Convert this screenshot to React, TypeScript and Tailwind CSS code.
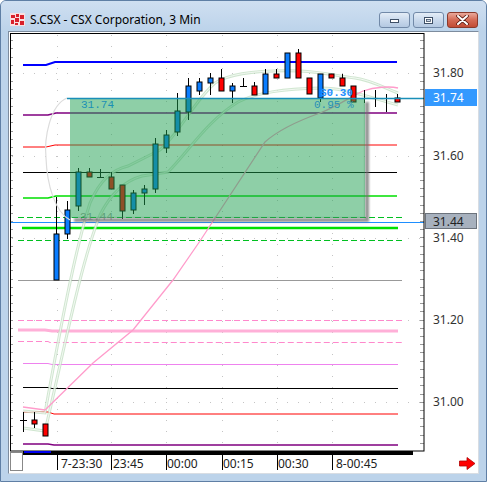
import React from 'react'

type Candle = [string, number, number, number, number]

// [type, wickTop, bodyTop, bodyBottom, wickBottom]; b = up (blue), r = down (red), d = doji cross, t = doji "T"
const candles: Candle[] = [
  ['d', 412, 420, 420, 432],
  ['r', 412, 420, 424, 428],
  ['r', 424, 424, 436, 436],
  ['b', 197, 234, 280, 280],
  ['b', 201, 210, 234, 239],
  ['b', 168, 172, 206, 211],
  ['r', 168, 172, 177, 177],
  ['t', 169, 177, 177, 177],
  ['r', 172, 177, 189, 189],
  ['r', 185, 185, 211, 219],
  ['b', 190, 193, 210, 214],
  ['b', 185, 189, 193, 205],
  ['b', 138, 144, 189, 193],
  ['b', 130, 135, 148, 153],
  ['b', 93, 111, 132, 136],
  ['b', 78, 86, 112, 120],
  ['b', 78, 82, 91, 95],
  ['b', 73, 78, 83, 95],
  ['r', 69, 78, 91, 91],
  ['b', 83, 86, 91, 103],
  ['t', 78, 86, 86, 86],
  ['r', 82, 86, 95, 95],
  ['b', 69, 74, 94, 94],
  ['r', 69, 74, 78, 78],
  ['b', 53, 53, 78, 78],
  ['r', 49, 53, 78, 78],
  ['r', 78, 78, 94, 94],
  ['b', 74, 74, 98, 102],
  ['r', 74, 74, 78, 78],
  ['r', 74, 78, 86, 86],
  ['r', 86, 86, 102, 102],
  ['d', 90, 98, 98, 103],
  ['d', 90, 98, 98, 107],
  ['d', 94, 98, 98, 112],
  ['r', 94, 98, 102, 102],
]

const hLines = [
  { d: 'M23,65 L46,65 L55,62 L397,62', c: '#0000ff', w: 2 },
  { d: 'M23,115 L48,115 L56,113 L397,113', c: '#800080', w: 1.5 },
  { d: 'M23,147 L46,147 L55,145 L397,145', c: '#ff0000', w: 1 },
  { d: 'M23,172.5 L397,172.5', c: '#000000', w: 1 },
  { d: 'M23,198 L48,198 L56,196 L397,196', c: '#00e000', w: 1.5 },
  { d: 'M18,217.5 L402,217.5', c: '#00c020', w: 1, dash: '6 3' },
  { d: 'M10,222.5 L424,222.5', c: '#1e8fff', w: 1 },
  { d: 'M22,228 L398,228', c: '#00e000', w: 2.5 },
  { d: 'M18,240.5 L402,240.5', c: '#00c020', w: 1, dash: '6 3' },
  { d: 'M18,280.5 L402,280.5', c: '#999999', w: 1 },
  { d: 'M18,320.5 L402,320.5', c: '#ff88cc', w: 1, dash: '6 3' },
  { d: 'M18,330 L45,330 L52,331 L398,331', c: '#ffb0d8', w: 3 },
  { d: 'M18,341.5 L48,341.5 L50,342.5 L402,342.5', c: '#ff88cc', w: 1, dash: '6 3' },
  { d: 'M23,363.5 L48,363.5 L52,364.5 L398,364.5', c: '#ee82ee', w: 1 },
  { d: 'M23,387.5 L48,387.5 L52,388.5 L398,388.5', c: '#000000', w: 1 },
  { d: 'M23,412 L48,412 L54,414 L398,414', c: '#ff0000', w: 1 },
  { d: 'M23,444 L48,444 L54,445 L398,445', c: '#800080', w: 1.5 },
]

const bands = [
  'M23,411 L45,413 C60,330 75,250 90,203 C100,180 112,170 128,166 L160,150 C178,135 195,100 215,83 C232,72 265,70 300,71 C322,72 338,76 355,78 C370,80 385,88 398,93',
  'M23,428 L45,431 C62,360 80,265 100,215 C110,195 124,181 142,176 L168,172 C188,152 208,120 238,102 C258,92 285,89 320,88 C345,88 365,96 398,105',
]

const priceY = (p: number) => 73 + (31.8 - p) * 411

const timeTicks = [
  { x: 57, t: '7-23:30', dx: 4 },
  { x: 111, t: '23:45', dx: 2 },
  { x: 166, t: '00:00', dx: 1 },
  { x: 222, t: '00:15', dx: 1 },
  { x: 277, t: '00:30', dx: 1 },
  { x: 332, t: '8-00:45', dx: 4 },
]

const gridY = [73, 156, 238, 320, 402]

function Chart() {
  const minor: number[] = []
  for (let p = 30.9; p <= 31.92; p += 0.02) {
    const y = Math.round(priceY(p)) + 0.5
    if (y > 34 && y < 450) minor.push(y)
  }
  return (
    <svg width={469} height={441} viewBox="9 32 469 441" className="block">
      <defs>
        <clipPath id="plot">
          <rect x={10} y={33} width={414} height={418} />
        </clipPath>
        <filter id="blur" x="-10%" y="-10%" width="120%" height="120%">
          <feGaussianBlur stdDeviation="1.3" />
        </filter>
      </defs>
      <rect x={9} y={32} width={469} height={441} fill="#ffffff" />

      <g clipPath="url(#plot)">
        {/* dotted grid */}
        {gridY.map((y) => (
          <line key={y} x1={12} x2={422} y1={y + 0.5} y2={y + 0.5} stroke="#c4c4c4" strokeDasharray="1 10" />
        ))}
        {timeTicks.map((t) => (
          <line key={t.x} x1={t.x + 0.5} x2={t.x + 0.5} y1={35} y2={450} stroke="#c4c4c4" strokeDasharray="1 10" />
        ))}

        {/* axis minor ticks */}
        {minor.map((y) => (
          <g key={y}>
            <line x1={10} x2={13} y1={y} y2={y} stroke="#9a9a9a" />
            <line x1={420} x2={424} y1={y} y2={y} stroke="#9a9a9a" />
          </g>
        ))}

        {/* level lines */}
        {hLines.map((l, i) => (
          <path key={i} d={l.d} fill="none" stroke={l.c} strokeWidth={l.w} strokeDasharray={l.dash} />
        ))}

        {/* bands: light double-edged strokes */}
        {bands.map((d, i) => (
          <g key={i} fill="none">
            <path d={d} stroke="#bcdcbc" strokeWidth={3} opacity={0.7} />
            <path d={d} stroke="#ffffff" strokeWidth={1} opacity={0.75} />
          </g>
        ))}
        {/* long average */}
        <path
          d="M23,407 L45,410 L93,363 L133,330 L173,280 L200,241 L265,142 C275,133 292,123 320,113 C336,107 350,97 363,91 C375,87 390,86 398,88"
          fill="none" stroke="#ff9ccb" strokeWidth={1.3}
        />

        {/* candles */}
        {candles.map(([k, wt, bt, bb, wb], i) => {
          const x = Math.round(23 + 11 * i) + 0.5
          if (k === 'd' || k === 't') {
            return (
              <g key={i} stroke="#000" strokeWidth={1}>
                <line x1={x} x2={x} y1={wt} y2={wb} />
                <line x1={x - 3.5} x2={x + 3.5} y1={bt + 0.5} y2={bt + 0.5} />
              </g>
            )
          }
          return (
            <g key={i}>
              <line x1={x} x2={x} y1={wt} y2={wb} stroke="#000" />
              <rect x={x - 2.5} y={bt} width={5} height={Math.max(bb - bt, 3)} fill={k === 'b' ? '#0a7dff' : '#ff0000'} stroke="#000" />
            </g>
          )
        })}

        <text x={80} y={220} fontFamily="'Liberation Mono', monospace" fontSize={11} fill="#9a9a9a">31.44</text>

        {/* selection arc */}
        <path d="M67,98 C50,105 44,138 46,158 C47,185 55,212 70,220" fill="none" stroke="#dcdcdc" strokeWidth={1.2} />

        {/* box shadow + shaded box */}
        <path d="M365,102 L369,102 L369,222 L74,222 L74,218 L365,218 Z" fill="#6f6f6f" opacity={0.75} filter="url(#blur)" />
        <rect x={70} y={98} width={295} height={120} fill="rgb(30,160,80)" opacity={0.5} />
        <line x1={67} x2={424} y1={98.5} y2={98.5} stroke="#1a8fb8" strokeWidth={1.5} />

        <text x={81} y={108} fontFamily="'Liberation Mono', monospace" fontSize={11} fill="#1b8fb5">31.74</text>
        <text x={320} y={96} fontFamily="'Liberation Mono', monospace" fontSize={11} fontWeight={700} fill="#1e8fff">$0.30</text>
        <text x={314} y={108} fontFamily="'Liberation Mono', monospace" fontSize={11} fill="#2890b8">0.95 %</text>
      </g>

      {/* plot frame */}
      <rect x={10.5} y={33.5} width={413.5} height={417.5} fill="none" stroke="#000" />
      <rect x={23} y={451} width={390} height={4} fill="#000" />
      <rect x={24} y={451} width={27} height={2} fill="#0000ee" />
      <rect x={10.5} y={452.5} width={12} height={18} fill="#fff" stroke="#888" />

      {/* price axis */}
      <g fontFamily="'Noto Sans', 'Open Sans', sans-serif" fontSize={12} fill="#333">
        <text x={433} y={77}>31.80</text>
        <text x={433} y={160}>31.60</text>
        <text x={433} y={242}>31.40</text>
        <text x={433} y={324}>31.20</text>
        <text x={433} y={406}>31.00</text>
      </g>
      <rect x={425} y={89} width={52} height={17} fill="#3399ff" />
      <text x={433} y={102} fontFamily="'Noto Sans', 'Open Sans', sans-serif" fontSize={12} fill="#ffffff">31.74</text>
      <rect x={425.5} y={213.5} width={51} height={15} fill="#a7b1be" stroke="#6c737c" />
      <text x={433} y={225.5} fontFamily="'Noto Sans', 'Open Sans', sans-serif" fontSize={12} fill="#222">31.44</text>

      {/* time axis */}
      {timeTicks.map((t) => (
        <g key={t.t}>
          <line x1={t.x + 0.5} x2={t.x + 0.5} y1={455} y2={470} stroke="#000" />
          <text x={t.x + t.dx} y={468} fontFamily="'Noto Sans', 'Open Sans', sans-serif" fontSize={12} fill="#222">
            {t.t}
          </text>
        </g>
      ))}

      <path d="M459.5,461 L467,461 L467,457.5 L475,463.5 L467,469.5 L467,466 L459.5,466 Z" fill="#ff0000" stroke="#b00000" strokeWidth={0.8} />
    </svg>
  )
}

function AppIcon() {
  return (
    <svg width={15} height={13} viewBox="0 0 15 13">
      <rect x={0} y={0} width={15} height={13} fill="#ffffff" />
      <rect x={0} y={0} width={15} height={13} fill="#d8202a" opacity={0.15} />
      <rect x={1} y={2} width={4} height={3} fill="#d8202a" />
      <rect x={6} y={1} width={3} height={3} fill="#d8202a" />
      <rect x={10} y={2} width={4} height={4} fill="#d8202a" />
      <rect x={1} y={7} width={3} height={4} fill="#d8202a" />
      <rect x={5} y={5} width={4} height={4} fill="#d8202a" />
      <rect x={10} y={8} width={4} height={4} fill="#d8202a" />
      <rect x={5} y={10} width={3} height={2} fill="#d8202a" />
    </svg>
  )
}

function CaptionButton({ kind }: { kind: 'min' | 'max' | 'close' }) {
  const isClose = kind === 'close'
  return (
    <div
      className={
        isClose
          ? 'w-[31px] h-[16px] rounded-[3px] border border-[#8a3a2c] bg-gradient-to-b from-[#e9a99b] via-[#d46a55] to-[#c24b34] flex items-center justify-center'
          : 'w-[31px] h-[16px] rounded-[3px] border border-[#7189a8] bg-gradient-to-b from-[#e4edf7] via-[#c9d9ec] to-[#b4c9e2] flex items-center justify-center'
      }
    >
      {kind === 'min' && (
        <svg width={11} height={8} viewBox="0 0 11 8">
          <rect x={1.5} y={3.5} width={8} height={3} fill="#fff" stroke="#3d4f66" />
        </svg>
      )}
      {kind === 'max' && (
        <svg width={11} height={9} viewBox="0 0 11 9">
          <rect x={1.5} y={1.5} width={8} height={6} fill="#fff" stroke="#3d4f66" />
          <rect x={3.5} y={3.5} width={4} height={2} fill="#cdd9e8" stroke="#3d4f66" strokeWidth={0.8} />
        </svg>
      )}
      {isClose && (
        <svg width={13} height={10} viewBox="0 0 13 10">
          <path d="M2,1 L11,9 M11,1 L2,9" stroke="#5a1a10" strokeWidth={3.6} strokeLinecap="round" />
          <path d="M2,1 L11,9 M11,1 L2,9" stroke="#ffffff" strokeWidth={2} strokeLinecap="round" />
        </svg>
      )}
    </div>
  )
}

export default function App() {
  return (
    <div className="w-[487px] h-[482px] bg-[#bcd3ea] border border-[#5f7fa5] rounded-t-[6px] flex flex-col overflow-hidden">
      {/* title bar */}
      <div className="h-[30px] pt-[7px] pl-[9px] pr-[8px] flex items-start bg-gradient-to-b from-[#cfdff1] to-[#bcd3ea]">
        <div className="h-[23px] flex items-center gap-[5px] flex-1">
          <AppIcon />
          <span className="text-[12px] text-black leading-none" style={{ fontFamily: "'Noto Sans', 'Open Sans', sans-serif" }}>
            S.CSX - CSX Corporation, 3 Min
          </span>
        </div>
        <div className="flex gap-[3px] pt-[4px]">
          <CaptionButton kind="min" />
          <CaptionButton kind="max" />
          <CaptionButton kind="close" />
        </div>
      </div>

      {/* client area */}
      <div className="mx-[7px] border border-t-[#7d8c9e] border-l-[#7d8c9e] border-r-[#d8dde3] border-b-[#d8dde3] bg-white">
        <Chart />
      </div>
    </div>
  )
}
